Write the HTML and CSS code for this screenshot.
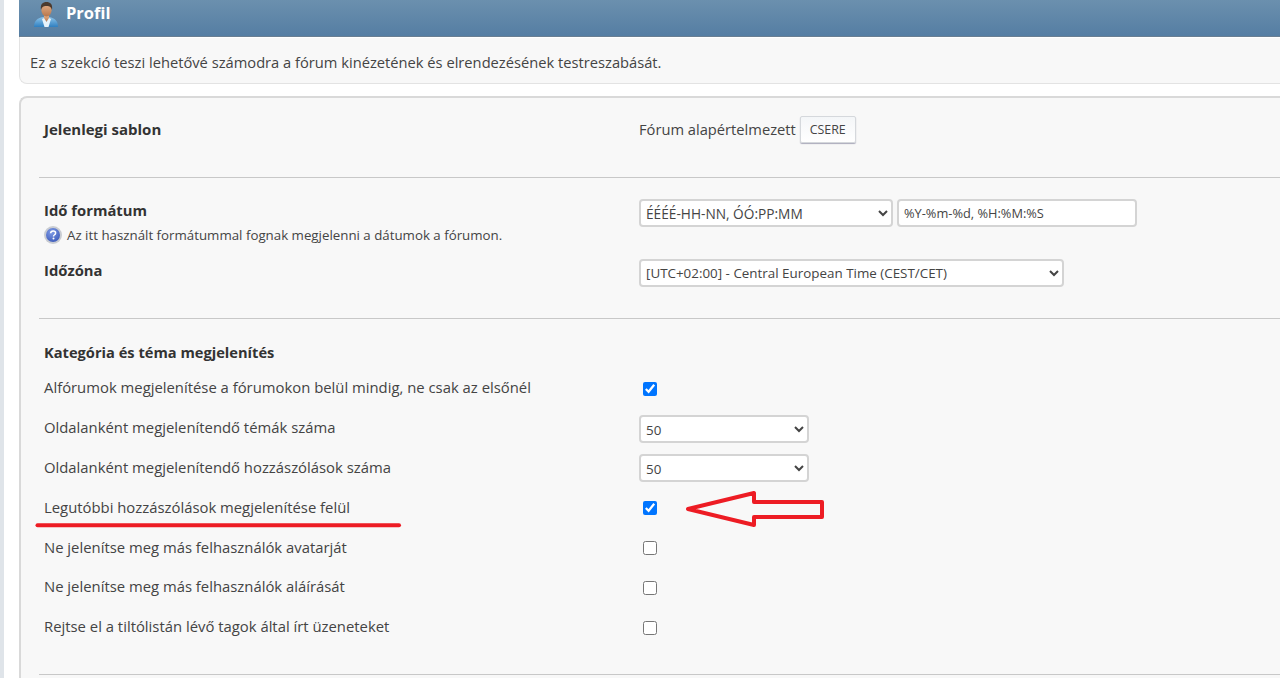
FILE: index.html
```html
<!DOCTYPE html>
<html lang="hu">
<head>
<meta charset="utf-8">
<title>Profil</title>
<link rel="stylesheet" href="styles.css">
</head>
<body>
<div class="page">
  <div class="main">
    <header class="cat-bar">
      <svg class="user-icon" width="28" height="28" viewBox="0 0 28 28" aria-hidden="true">
        <defs>
          <linearGradient id="shirt" x1="0" y1="0" x2="0" y2="1"><stop offset="0" stop-color="#8cc4ea"/><stop offset="1" stop-color="#2f7fc0"/></linearGradient>
          <linearGradient id="skin" x1="0" y1="0" x2="0" y2="1"><stop offset="0" stop-color="#e8b48c"/><stop offset="1" stop-color="#b9774c"/></linearGradient>
        </defs>
        <path d="M1 27c0-6 3-9 9-10h6c6 1 9 4 9 10z" fill="url(#shirt)"/>
        <path d="M11 15h5v4l-2.500 3-2.500-3z" fill="url(#skin)"/>
        <path d="M11 18l2.500 4 2.500-4 2 1-2.500 8h-4l-2.500-8z" fill="#e6f2fa"/>
        <ellipse cx="13.500" cy="9.500" rx="5.200" ry="7" fill="url(#skin)"/>
        <path d="M8 10C7 4 10 2 13.500 2S20 4 19 10c-1-3-2-4-5.500-4S9 7 8 10z" fill="#4b3a2e"/>
      </svg>
      <h1 class="cat-title">Profil</h1>
    </header>
    <div class="intro">Ez a szekció teszi lehetővé számodra a fórum kinézetének és elrendezésének testreszabását.</div>
    <form class="panel">
      <section class="group group-theme">
        <div class="row">
          <strong class="label-big label-theme">Jelenlegi sablon</strong>
          <div class="control control-theme">
            <span>Fórum alapértelmezett</span>
            <button type="button" class="btn">CSERE</button>
          </div>
        </div>
      </section>
      <section class="group group-time">
        <div class="row row-time">
          <div>
            <strong class="label-big">Idő formátum</strong>
            <div class="hint">
              <svg class="help" width="18" height="18" viewBox="0 0 18 18" aria-hidden="true">
                <defs><radialGradient id="hb" cx="0.400" cy="0.300" r="0.800"><stop offset="0" stop-color="#7f9be6"/><stop offset="1" stop-color="#3a58b8"/></radialGradient></defs>
                <circle cx="9" cy="9" r="9" fill="#c9ccd2"/>
                <circle cx="9" cy="9" r="7" fill="url(#hb)"/>
                <path d="M6.600 7.200C6.700 5.800 7.700 5 9.100 5c1.500 0 2.500.8 2.500 2 0 1-.6 1.500-1.300 2-.6.400-.8.700-.8 1.400" fill="none" stroke="#fff" stroke-width="1.500"/>
                <circle cx="9.500" cy="12.500" r="1" fill="#fff"/>
              </svg>
              <span>Az itt használt formátummal fognak megjelenni a dátumok a fórumon.</span>
            </div>
          </div>
          <div class="control control-top">
            <select class="sel sel-format"><option>ÉÉÉÉ-HH-NN, ÓÓ:PP:MM</option></select>
            <input class="txt" type="text" value="%Y-%m-%d, %H:%M:%S">
          </div>
        </div>
        <div class="row row-zone">
          <strong class="label-big">Időzóna</strong>
          <div class="control">
            <select class="sel sel-zone"><option>[UTC+02:00] - Central European Time (CEST/CET)</option></select>
          </div>
        </div>
      </section>
      <section class="group group-list">
        <strong class="list-title">Kategória és téma megjelenítés</strong>
        <div class="row row-opt"><span>Alfórumok megjelenítése a fórumokon belül mindig, ne csak az elsőnél</span><div class="control"><input class="chk" type="checkbox" checked></div></div>
        <div class="row row-opt"><span>Oldalanként megjelenítendő témák száma</span><div class="control"><select class="sel sel-num"><option>50</option></select></div></div>
        <div class="row row-opt"><span>Oldalanként megjelenítendő hozzászólások száma</span><div class="control"><select class="sel sel-num"><option>50</option></select></div></div>
        <div class="row row-opt"><span>Legutóbbi hozzászólások megjelenítése felül</span><div class="control"><input class="chk" type="checkbox" checked></div></div>
        <div class="row row-opt"><span>Ne jelenítse meg más felhasználók avatarját</span><div class="control"><input class="chk" type="checkbox"></div></div>
        <div class="row row-opt"><span>Ne jelenítse meg más felhasználók aláírását</span><div class="control"><input class="chk" type="checkbox"></div></div>
        <div class="row row-opt"><span>Rejtse el a tiltólistán lévő tagok által írt üzeneteket</span><div class="control"><input class="chk" type="checkbox"></div></div>
      </section>
    </form>
  </div>
</div>
<svg class="markup" width="1280" height="678" viewBox="0 0 1280 678" aria-hidden="true">
  <path d="M37.500 525.200H399" fill="none" stroke="#ed1c24" stroke-width="4" stroke-linecap="round"/>
  <path d="M688 509L754 493V502H822V517H754V525Z" fill="none" stroke="#ed1c24" stroke-width="4" stroke-linejoin="round"/>
</svg>
</body>
</html>
```

FILE: styles.css
```css
* { box-sizing: border-box; }
html, body { margin: 0; height: 678px; overflow: hidden; }
body {
  background: #fff;
  color: #444;
  font-family: "Open Sans", "Noto Sans", sans-serif;
  font-size: 14.700px;
  position: relative;
}
.page {
  border-left: 4px solid #dfe4e9;
  padding-left: 15px;
  height: 678px;
}
.main { width: 1270px; }
.cat-bar {
  height: 37px;
  display: flex;
  align-items: flex-start;
  gap: 5px;
  padding-left: 14px;
  background: linear-gradient(#6b90ae, #557ea3);
  border-bottom: 1px solid #6a7f92;
}
.user-icon { flex: none; }
.cat-title {
  margin: 2px 0 0;
  font-size: 16.500px;
  line-height: 22px;
  font-weight: 700;
  color: #fff;
}
.intro {
  height: 47px;
  padding: 15px 10px 0;
  line-height: 20px;
  background: #f8f8f8;
  border-bottom: 1px solid #e3e3e3;
  border-left: 1px solid #e3e3e3;
  border-radius: 0 0 0 8px;
  box-shadow: inset 0 1px 0 #fff;
}
.panel {
  margin-top: 12px;
  padding: 0 0 0 18px;
  background: #f8f8f8;
  border-top: 2px solid #d9d9d9;
  border-left: 2px solid #d9d9d9;
  border-radius: 8px 0 0 0;
  height: 600px;
}
.group { border-bottom: 1px solid #c8c8c8; padding-left: 5px; }
.row {
  display: grid;
  grid-template-columns: 595px 1fr;
  align-items: center;
}
.control { display: flex; align-items: center; gap: 4px; }
.control-theme { gap: 4px; }
.control-top { align-self: start; }
.group-theme { height: 80px; padding-top: 16px; }
.group-theme .row { height: 30px; }
.group-time { height: 141px; padding-top: 21px; }
.row-time { height: 59px; align-items: start; }
.row-zone { height: 29px; }
.label-big { font-weight: 700; font-size: 14.800px; color: #333; line-height: 22px; display: block; }
.label-theme { font-size: 15px; }
.row-zone .label-big { margin-top: -6px; }
.hint { display: flex; align-items: center; gap: 5px; font-size: 13.300px; line-height: 16px; margin-top: 5px; }
.help { flex: none; }
.btn {
  height: 27px;
  width: 56px;
  margin-top: 1px;
  padding: 0;
  font: 12.400px "Open Sans", "Noto Sans", sans-serif;
  color: #444;
  background: linear-gradient(#f4f6f8, #fff);
  border: 1px solid #d5d8dc;
  border-radius: 2px;
  box-shadow: 0 1px 1px #aab;
}
.sel, .txt {
  height: 28px;
  font: 13.400px "Open Sans", "Noto Sans", sans-serif;
  color: #444;
  background: #fff;
  border: 2px solid #d4d4d4;
  border-radius: 4px;
}
.sel { padding: 0 1px; }
.txt { padding: 0 5px; font-size: 12.800px; }
.sel-format { width: 254px; font-size: 13.700px; }
.txt { width: 240px; }
.sel-zone { width: 425px; }
.sel-num { width: 170px; padding-top: 2px; }
.group-list { height: 356px; padding-top: 23px; }
.list-title { display: block; line-height: 20px; margin-bottom: 7px; font-size: 14.650px; font-weight: 700; color: #333; }
.row-opt { height: 39.800px; font-size: 14.850px; }
.row-opt > span { margin-top: -3px; }
.chk { margin: 0 0 0 4px; width: 14px; height: 14px; accent-color: #0075ff; }
.markup { position: absolute; left: 0; top: 0; pointer-events: none; }
```
